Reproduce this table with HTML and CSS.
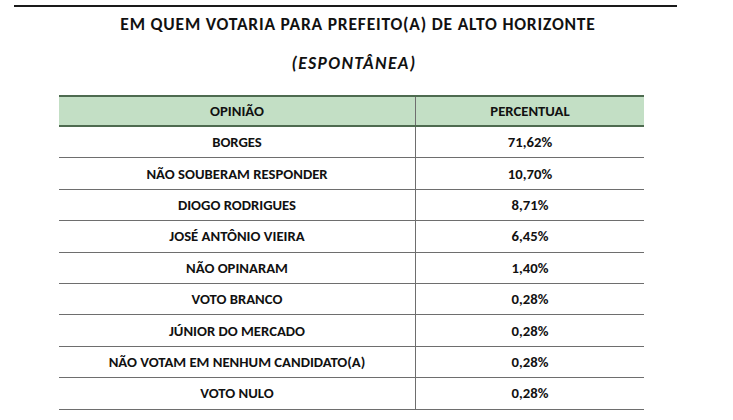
FILE: index.html
```html
<!DOCTYPE html>
<html lang="pt">
<head>
<meta charset="utf-8">
<link rel="stylesheet" href="styles.css">
</head>
<body>
<div class="page">
  <div class="rule"></div>
  <h1 class="title">EM QUEM VOTARIA PARA PREFEITO(A) DE ALTO HORIZONTE</h1>
  <h2 class="subtitle">(ESPONTÂNEA)</h2>
  <table class="results">
    <thead>
      <tr><th class="c1">OPINIÃO</th><th class="c2">PERCENTUAL</th></tr>
    </thead>
    <tbody>
      <tr><td class="c1">BORGES</td><td class="c2">71,62%</td></tr>
      <tr><td class="c1">NÃO SOUBERAM RESPONDER</td><td class="c2">10,70%</td></tr>
      <tr><td class="c1">DIOGO RODRIGUES</td><td class="c2">8,71%</td></tr>
      <tr><td class="c1">JOSÉ ANTÔNIO VIEIRA</td><td class="c2">6,45%</td></tr>
      <tr><td class="c1">NÃO OPINARAM</td><td class="c2">1,40%</td></tr>
      <tr><td class="c1">VOTO BRANCO</td><td class="c2">0,28%</td></tr>
      <tr><td class="c1">JÚNIOR DO MERCADO</td><td class="c2">0,28%</td></tr>
      <tr><td class="c1">NÃO VOTAM EM NENHUM CANDIDATO(A)</td><td class="c2">0,28%</td></tr>
      <tr><td class="c1">VOTO NULO</td><td class="c2">0,28%</td></tr>
    </tbody>
  </table>
</div>
</body>
</html>
```
FILE: styles.css
```css
html, body {
  margin: 0;
  padding: 0;
  background: #ffffff;
}
body {
  font-family: "Carlito", "Lato", "Liberation Sans", sans-serif;
  color: #111111;
  font-weight: 700;
}
.page {
  width: 733px;
  height: 420px;
  overflow: hidden;
  display: flex;
  flex-direction: column;
  align-items: flex-start;
}
.rule {
  margin: 5px 0 0 14px;
  width: 663px;
  height: 2px;
  background: #1a1a1a;
}
.title {
  align-self: stretch;
  margin: 6px 0 0 0;
  padding-right: 17px;
  font-size: 17.5px;
  letter-spacing: 0.8px;
  line-height: 22px;
  font-weight: 700;
  text-align: center;
}
.subtitle {
  align-self: stretch;
  margin: 17px 0 0 0;
  padding-right: 25px;
  font-size: 17.5px;
  letter-spacing: 1.4px;
  line-height: 22px;
  font-weight: 700;
  font-style: italic;
  text-align: center;
}
.results {
  margin: 21px 0 0 59px;
  width: 584px;
  border-collapse: collapse;
  font-size: 14.7px;
  table-layout: fixed;
}
.results th, .results td {
  padding: 0;
  text-align: center;
  vertical-align: middle;
  font-weight: 700;
}
.results th {
  height: 28px;
  line-height: 20px;
  background: #c3dfc5;
  border-top: 2px solid #4e6b50;
  border-bottom: 2px solid #4e6b50;
}
.results td {
  height: 30.4px;
  line-height: 20px;
  border-bottom: 1.5px solid #6e6e6e;
}
.results .c1 {
  width: 356px;
  border-right: 1.5px solid #6e6e6e;
}
.results .c2 {
  width: 228px;
}
```
